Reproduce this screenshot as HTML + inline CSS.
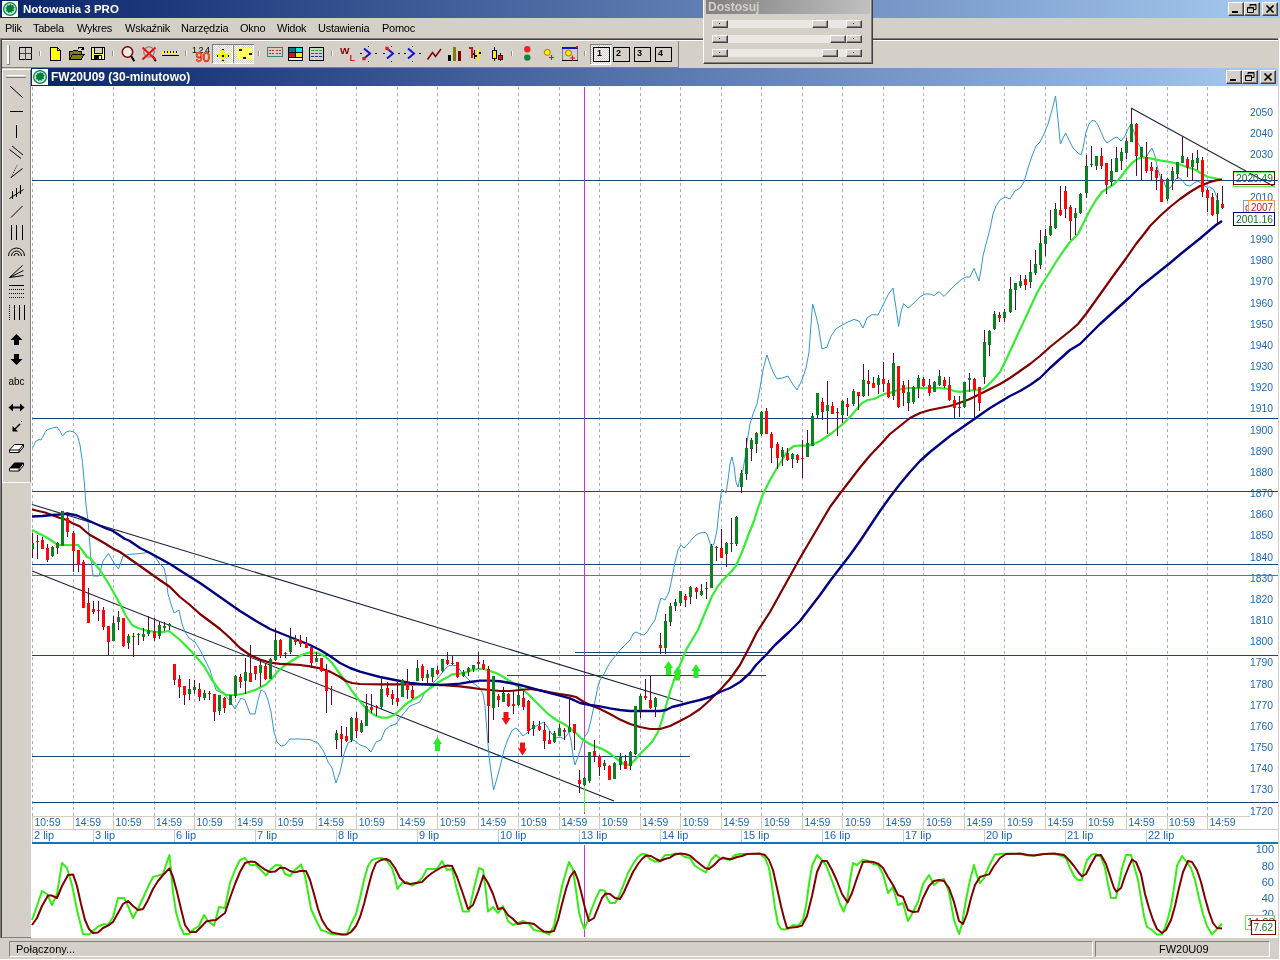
<!DOCTYPE html>
<html lang="pl">
<head>
<meta charset="utf-8">
<title>Notowania 3 PRO</title>
<style>
html,body{margin:0;padding:0;}
body{width:1280px;height:960px;overflow:hidden;background:#d4d0c8;position:relative;font-family:"Liberation Sans",sans-serif;font-size:11px;color:#000;}
.abs{position:absolute;}
#wrap{position:absolute;left:0;top:0;width:1280px;height:960px;will-change:transform;}
#titlebar{left:0;top:0;width:1280px;height:18px;background:linear-gradient(to right,#0a246a 0%,#a6caf0 100%);}
#titlebar .t{left:23px;top:1px;color:#fff;font-weight:bold;font-size:11.5px;line-height:16px;white-space:nowrap;}
.wbtn{width:16px;height:14px;background:#d4d0c8;box-sizing:border-box;border:1px solid;border-color:#fff #404040 #404040 #fff;box-shadow:inset -1px -1px 0 #808080;}
#menubar{left:0;top:18px;width:1280px;height:20px;background:#d4d0c8;}
#menubar span{position:absolute;top:3px;line-height:14px;font-size:11px;white-space:nowrap;letter-spacing:-0.25px;}
#tbline1{left:0;top:38px;width:1278px;height:1px;background:#808080;border-bottom:1px solid #404040;}
#tbline2{left:2px;top:40px;width:1276px;height:1px;background:#fff;}
#ledge{left:0;top:39px;width:1px;height:919px;background:#808080;border-right:1px solid #404040;}
#toolbar{left:2px;top:41px;width:677px;height:27px;background:#d4d0c8;box-sizing:border-box;border-right:1px solid #808080;border-bottom:1px solid #808080;}
.sep{width:1px;height:5px;background:#fff;top:52px;border-right:1px solid #a0a0a0;}
#childtitle{left:31px;top:68px;width:1247px;height:18px;background:linear-gradient(to right,#0a246a 0%,#a6caf0 100%);}
#childtitle .t{left:19px;top:1px;color:#fff;font-weight:bold;font-size:12px;line-height:16px;white-space:nowrap;}
#lefttb{left:2px;top:69px;width:29px;height:414px;background:#d4d0c8;box-sizing:border-box;border:1px solid;border-color:#fff #808080 #fff #fff;}
#chartbg{left:31px;top:86px;width:1247px;height:852px;background:#fff;}
#statusbar{left:0;top:938px;width:1280px;height:22px;background:#d4d0c8;}
.sunk{box-sizing:border-box;border:1px solid;border-color:#808080 #fff #fff #808080;}
#dost{left:703px;top:-1px;width:170px;height:65px;background:#d4d0c8;box-sizing:border-box;border:1px solid;border-color:#fff #404040 #404040 #fff;box-shadow:inset -1px -1px 0 #808080;}
#dost .tt{left:2px;top:0px;width:164px;height:14px;background:linear-gradient(to right,#808080,#c0c0c0);}
#dost .tt span{position:absolute;left:2px;top:0px;font-weight:bold;font-size:12px;line-height:14px;color:#d4d0c8;}
.sbtn{height:8px;width:16px;position:absolute;background:#d4d0c8;box-sizing:border-box;border:1px solid;border-color:#fff #404040 #404040 #fff;box-shadow:inset -1px -1px 0 #808080;}
.strack{height:8px;background:#eae8e4;}
svg text{font-family:"Liberation Sans",sans-serif;}
.sbtn.d::after{content:"";position:absolute;left:6px;top:2px;width:1px;height:1px;background:#000;}
</style>
</head>
<body>
<div id="wrap">
<div id="titlebar" class="abs">
 <svg class="abs" style="left:2px;top:1px" width="16" height="16" viewBox="0 0 16 16"><rect width="16" height="16" fill="#fff"/><circle cx="8" cy="8" r="6.4" fill="#b4f0d4" stroke="#178050" stroke-width="1.3"/><path d="M8.3 3 L9.5 4.3 L11.5 3.8 L11.3 5.5 L12.8 6.5 L11.5 8 L12 10 L10 10.2 L9.5 12 L8 11 L6.5 12.3 L5.8 10.5 L3.8 10.3 L4.5 8.5 L3.5 6.8 L5 5.8 L5 4 L6.8 4.5 Z" fill="#0a7a3a"/></svg>
 <div class="abs t">Notowania 3 PRO</div>
 <div class="abs wbtn" style="left:1228px;top:2px"><svg width="14" height="12"><rect x="3" y="8" width="6" height="2" fill="#000"/></svg></div>
 <div class="abs wbtn" style="left:1244px;top:2px"><svg width="14" height="12"><path d="M5 1.5h6v5h-2 M5 1.5v2 M2.5 4.5h6v5h-6z M5 2h6 M2.5 5h6" fill="none" stroke="#000" stroke-width="1"/></svg></div>
 <div class="abs wbtn" style="left:1262px;top:2px"><svg width="14" height="12"><path d="M3.5 2.5l7 7M10.5 2.5l-7 7" stroke="#000" stroke-width="1.7" fill="none"/></svg></div>
</div>
<div id="menubar" class="abs">
 <span style="left:5px">Plik</span><span style="left:33px">Tabela</span><span style="left:77px">Wykres</span><span style="left:125px">Wskaźnik</span><span style="left:181px">Narzędzia</span><span style="left:240px">Okno</span><span style="left:277px">Widok</span><span style="left:318px">Ustawienia</span><span style="left:382px">Pomoc</span>
</div>
<div id="tbline1" class="abs"></div><div id="tbline2" class="abs"></div><div id="ledge" class="abs"></div>
<div id="toolbar" class="abs"></div>
<div id="childtitle" class="abs">
 <svg class="abs" style="left:1px;top:1px" width="16" height="16" viewBox="0 0 16 16"><rect width="16" height="16" fill="#fff"/><circle cx="8" cy="8" r="6.4" fill="#b4f0d4" stroke="#178050" stroke-width="1.3"/><path d="M8.3 3 L9.5 4.3 L11.5 3.8 L11.3 5.5 L12.8 6.5 L11.5 8 L12 10 L10 10.2 L9.5 12 L8 11 L6.5 12.3 L5.8 10.5 L3.8 10.3 L4.5 8.5 L3.5 6.8 L5 5.8 L5 4 L6.8 4.5 Z" fill="#0a7a3a"/></svg>
 <div class="abs t" style="left:20px">FW20U09 (30-minutowo)</div>
 <div class="abs wbtn" style="left:1195px;top:2px"><svg width="14" height="12"><rect x="3" y="8" width="6" height="2" fill="#000"/></svg></div>
 <div class="abs wbtn" style="left:1211px;top:2px"><svg width="14" height="12"><path d="M5 1.5h6v5h-2 M5 1.5v2 M2.5 4.5h6v5h-6z M5 2h6 M2.5 5h6" fill="none" stroke="#000" stroke-width="1"/></svg></div>
 <div class="abs wbtn" style="left:1229px;top:2px"><svg width="14" height="12"><path d="M3.5 2.5l7 7M10.5 2.5l-7 7" stroke="#000" stroke-width="1.7" fill="none"/></svg></div>
</div>
<div id="lefttb" class="abs"></div>
<div id="chartbg" class="abs"></div>
<div class="abs" style="left:2px;top:937px;width:29px;height:1px;background:#808080"></div>
<div id="statusbar" class="abs">
 <div class="abs sunk" style="left:9px;top:3px;width:1084px;height:16px"><span class="abs" style="left:6px;top:0;line-height:14px;font-size:11px">Połączony...</span></div>
 <div class="abs sunk" style="left:1095px;top:3px;width:175px;height:16px"><span class="abs" style="left:63px;top:0;line-height:14px;font-size:11px">FW20U09</span></div>
</div>
<div class="abs" style="left:1279px;top:38px;width:1px;height:922px;background:#fff"></div>
<div class="abs" style="left:0;top:959px;width:1280px;height:1px;background:#fff"></div>
<div id="dost" class="abs">
 <div class="abs tt"><span>Dostosuj</span></div>
 <div class="abs strack" style="left:24px;top:20px;width:118px"></div>
 <div class="abs strack" style="left:24px;top:35px;width:118px"></div>
 <div class="abs strack" style="left:24px;top:49px;width:118px"></div>
 <div class="abs sbtn d" style="left:8px;top:20px"></div><div class="abs sbtn d" style="left:142px;top:20px"></div><div class="abs sbtn" style="left:108px;top:20px"></div>
 <div class="abs sbtn d" style="left:8px;top:35px"></div><div class="abs sbtn d" style="left:142px;top:35px"></div><div class="abs sbtn" style="left:126px;top:35px"></div>
 <div class="abs sbtn d" style="left:8px;top:49px"></div><div class="abs sbtn d" style="left:142px;top:49px"></div><div class="abs sbtn" style="left:118px;top:49px"></div>
</div>
<svg class="abs" style="left:0;top:0" width="1280" height="70" viewBox="0 0 1280 70">
<defs><pattern id="dith" width="2" height="2" patternUnits="userSpaceOnUse"><rect width="2" height="2" fill="#fff"/><rect width="1" height="1" fill="#d4d0c8"/><rect x="1" y="1" width="1" height="1" fill="#d4d0c8"/></pattern></defs>
<rect x="7" y="45" width="2" height="19" fill="#fff"/><rect x="9" y="45" width="1" height="20" fill="#808080"/><rect x="7" y="64" width="2" height="1" fill="#808080"/>
<rect x="39" y="51" width="1" height="5" fill="#909090"/><rect x="40" y="51" width="1" height="5" fill="#fff"/>
<rect x="112" y="51" width="1" height="5" fill="#909090"/><rect x="113" y="51" width="1" height="5" fill="#fff"/>
<rect x="185" y="51" width="1" height="5" fill="#909090"/><rect x="186" y="51" width="1" height="5" fill="#fff"/>
<rect x="258" y="51" width="1" height="5" fill="#909090"/><rect x="259" y="51" width="1" height="5" fill="#fff"/>
<rect x="331" y="51" width="1" height="5" fill="#909090"/><rect x="332" y="51" width="1" height="5" fill="#fff"/>
<rect x="511" y="51" width="1" height="5" fill="#909090"/><rect x="512" y="51" width="1" height="5" fill="#fff"/>
<rect x="584" y="51" width="1" height="5" fill="#909090"/><rect x="585" y="51" width="1" height="5" fill="#fff"/>
<g shape-rendering="crispEdges">
<rect x="19.5" y="47.5" width="12" height="12" fill="none" stroke="#000"/><path d="M25.5 48v12M20 53.5h12" stroke="#404040"/>
<path d="M50.5 47.5h7l3 3v9.5h-10z" fill="#ffff00" stroke="#000"/><path d="M57.5 47.5v3h3" fill="none" stroke="#000"/>
<path d="M69.5 59.5v-8h3l1-1.5h4l1 1.5h3v2" fill="#808000" stroke="#000"/><path d="M69.5 59.5l3-5.5h12l-3.5 5.5z" fill="#808000" stroke="#000"/>
<path d="M78 48.5c1-2 4-2 5 0.5M83.5 46.5v3h-3" fill="none" stroke="#000"/>
<rect x="91.500" y="47.500" width="13" height="12" fill="#ffff66" stroke="#000"/><rect x="94" y="48" width="8" height="5" fill="#d4d0c8" stroke="none"/><path d="M94.500 48v5h8v-5" fill="none" stroke="#000"/><rect x="94" y="55" width="8" height="5" fill="#000"/><rect x="99" y="56" width="2" height="3" fill="#fff"/>
</g>
<circle cx="127.500" cy="52" r="5.200" fill="#eeeae6" stroke="#800000" stroke-width="1.500"/><path d="M131.300 56.300l3 5" stroke="#000" stroke-width="2"/>
<circle cx="149" cy="52" r="5.200" fill="#d4d0c8" stroke="#808080" stroke-width="1.200"/><path d="M152.800 56.300l3 5" stroke="#000" stroke-width="2"/><path d="M142.500 47.500l13 12M155.500 47.500l-13 12" stroke="#ee1111" stroke-width="2"/>
<g shape-rendering="crispEdges"><rect x="162" y="51" width="17" height="3" fill="#ffff00"/><path d="M164.500 51v2M167.500 51v2M170.500 51v2M173.500 51v2M176.500 51v2" stroke="#000"/><rect x="162" y="55" width="17" height="1" fill="#000"/></g>
<text x="192" y="53" font-size="9" fill="#000" font-family="Liberation Sans,sans-serif" textLength="18">1 2 4</text>
<text x="195.500" y="61.500" font-size="14" fill="#ffb040" stroke="#dd1111" stroke-width="0.700" font-family="Liberation Sans,sans-serif" textLength="14.500" lengthAdjust="spacingAndGlyphs">90</text>
<g shape-rendering="crispEdges"><rect x="212" y="44" width="20" height="19" fill="url(#dith)"/><path d="M212.5 63v-18.500h20" fill="none" stroke="#808080"/><path d="M232.5 44.500v18.500h-20" fill="none" stroke="#fff"/></g>
<g shape-rendering="crispEdges"><rect x="233" y="44" width="20" height="19" fill="url(#dith)"/><path d="M233.5 63v-18.500h20" fill="none" stroke="#808080"/><path d="M253.5 44.500v18.500h-20" fill="none" stroke="#fff"/></g>
<g shape-rendering="crispEdges"><rect x="221" y="49" width="3" height="12" fill="#ffee00"/><rect x="217" y="54" width="12" height="3" fill="#ffee00"/><rect x="222" y="49" width="2" height="1" fill="#000"/><rect x="222" y="60" width="2" height="1" fill="#000"/><rect x="217" y="55" width="1" height="2" fill="#000"/><rect x="228" y="55" width="1" height="2" fill="#000"/><rect x="222" y="55" width="2" height="2" fill="#000"/>
<rect x="237" y="48" width="15" height="12" fill="#ffff66"/><rect x="239" y="49" width="3" height="2" fill="#400000"/><rect x="249" y="53" width="3" height="2" fill="#400000"/><rect x="243" y="57" width="3" height="2" fill="#400000"/>
<rect x="267.500" y="47.500" width="15" height="9" fill="#d4d0c8" stroke="#2a8a7a"/><path d="M269 50.500h5M276 50.500h5M269 53.500h5M276 53.500h5" stroke="#cc2222" stroke-dasharray="2 1"/>
<rect x="288" y="47" width="15" height="14" fill="#000"/><rect x="289" y="48" width="6" height="4" fill="#007a7a"/><rect x="296" y="48" width="6" height="4" fill="#00eeee"/><rect x="289" y="53" width="6" height="4" fill="#dd1111"/><rect x="296" y="53" width="6" height="4" fill="#ffee00"/><rect x="289" y="58" width="13" height="2" fill="#fff"/>
<rect x="309.500" y="47.500" width="14" height="13" fill="#d4d0c8" stroke="#000"/><path d="M311 50.500h11" stroke="#22aa22" stroke-dasharray="3 1"/><path d="M311 53.500h11" stroke="#cc2222" stroke-dasharray="3 1"/><path d="M311 56.500h11" stroke="#2222cc" stroke-dasharray="3 1"/>
</g>
<text x="340" y="53.500" font-size="8.500" font-weight="bold" fill="#800000" font-family="Liberation Sans,sans-serif" textLength="9.500" lengthAdjust="spacingAndGlyphs">W</text><text x="349.500" y="60.800" font-size="8.500" font-weight="bold" fill="#ee1111" font-family="Liberation Sans,sans-serif" textLength="5.500" lengthAdjust="spacingAndGlyphs">L</text>
<path d="M364.0 48.500l6 5l-6 5" fill="none" stroke="#1111dd" stroke-width="2"/><g shape-rendering="crispEdges" fill="#000"><rect x="360" y="53" width="2" height="1"/><rect x="375" y="53" width="2" height="1"/><rect x="368" y="46" width="1" height="1"/><rect x="368" y="61" width="1" height="1"/></g><path d="M366.0 56.500l-3 3m0 -2.500v2.500h2.500" fill="none" stroke="#ee1111" stroke-width="1.300"/>
<path d="M387.0 48.500l6 5l-6 5" fill="none" stroke="#1111dd" stroke-width="2"/><g shape-rendering="crispEdges" fill="#000"><rect x="383" y="53" width="2" height="1"/><rect x="398" y="53" width="2" height="1"/><rect x="391" y="46" width="1" height="1"/><rect x="391" y="61" width="1" height="1"/></g><path d="M389.0 50.500l-3 -3m0 2.500v-2.500h2.500" fill="none" stroke="#ee1111" stroke-width="1.300"/>
<path d="M408.0 48.500l6 5l-6 5" fill="none" stroke="#1111dd" stroke-width="2"/><g shape-rendering="crispEdges" fill="#000"><rect x="404" y="53" width="2" height="1"/><rect x="419" y="53" width="2" height="1"/><rect x="412" y="46" width="1" height="1"/><rect x="412" y="61" width="1" height="1"/></g>
<path d="M427.500 59.500l5-7l3 4l5.500-7.500" fill="none" stroke="#800000" stroke-width="1.500"/>
<g shape-rendering="crispEdges"><rect x="448" y="55" width="3" height="6" fill="#000"/><rect x="453" y="47" width="3" height="14" fill="#808000"/><rect x="458" y="51" width="3" height="10" fill="#800000"/>
<rect x="471" y="47" width="2" height="11" fill="#dd1111"/><rect x="469" y="47" width="2" height="2" fill="#dd1111"/><rect x="473" y="53" width="2" height="2" fill="#000"/><rect x="477" y="49" width="2" height="12" fill="#ffee00"/><rect x="475" y="55" width="2" height="2" fill="#000"/><rect x="479" y="52" width="2" height="2" fill="#000"/><rect x="474" y="50" width="1" height="9" fill="#000"/>
<rect x="492.500" y="50.500" width="4" height="8" fill="#ffee00" stroke="#000"/><path d="M494.500 47v3M494.500 59v2" stroke="#000"/><rect x="498.500" y="55.500" width="4" height="4" fill="#dd1111" stroke="#400000"/><path d="M500.500 53v2M500.500 60v1" stroke="#000"/></g>
<circle cx="527.300" cy="49.300" r="3.200" fill="#ee2222"/><circle cx="527.300" cy="57.600" r="3.200" fill="#118833"/>
<circle cx="547.300" cy="52.400" r="3" fill="#ffee00" stroke="#806600" stroke-width="0.800"/><path d="M549 57.500h5M551.500 55v5" stroke="#ee1111" stroke-width="1.200"/>
<g shape-rendering="crispEdges"><rect x="562" y="47" width="16" height="14" fill="#d4d0c8"/><rect x="562" y="47" width="16" height="2" fill="#1111cc"/><rect x="562" y="60" width="16" height="1" fill="#000"/><rect x="562" y="49" width="1" height="11" fill="#808080"/><rect x="577" y="49" width="1" height="11" fill="#808080"/><rect x="576" y="46" width="2" height="2" fill="#ee1111"/></g>
<circle cx="568.500" cy="53" r="3" fill="#ffee00" stroke="#806600" stroke-width="0.800"/><path d="M570 58h5M572.500 55.500v5" stroke="#ee1111" stroke-width="1.200"/>
<g shape-rendering="crispEdges"><rect x="590" y="44" width="21" height="20" fill="url(#dith)"/><path d="M590.500 64v-19.500h21" fill="none" stroke="#808080"/><path d="M610.500 44.500v19.500h-21" fill="none" stroke="#fff"/>
<rect x="593.5" y="47.500" width="16" height="14" fill="none" stroke="#000"/>
<rect x="613.5" y="47.500" width="16" height="14" fill="none" stroke="#000"/>
<rect x="634.5" y="47.500" width="16" height="14" fill="none" stroke="#000"/>
<rect x="655.5" y="47.500" width="16" height="14" fill="none" stroke="#000"/>
</g>
<text x="597" y="56" font-size="9" font-weight="bold" fill="#000" font-family="Liberation Sans,sans-serif">1</text>
<text x="616" y="56" font-size="9" font-weight="bold" fill="#000" font-family="Liberation Sans,sans-serif">2</text>
<text x="637" y="56" font-size="9" font-weight="bold" fill="#000" font-family="Liberation Sans,sans-serif">3</text>
<text x="658" y="56" font-size="9" font-weight="bold" fill="#000" font-family="Liberation Sans,sans-serif">4</text>
</svg>
<svg class="abs" style="left:0;top:68px" width="32" height="420" viewBox="0 68 32 420">
<g shape-rendering="crispEdges"><rect x="6" y="75" width="20" height="1" fill="#fff"/><rect x="6" y="77" width="20" height="1" fill="#808080"/></g>
<g stroke="#000" stroke-width="1" fill="none">
<path d="M10 86l12.500 11.500"/>
<path d="M10 111.500h13" shape-rendering="crispEdges"/>
<path d="M16.500 125v13" shape-rendering="crispEdges"/>
<path d="M9.500 149.500l11.500 9M12 146l11 9"/>
<path d="M11 177.500l11.500-9"/><path d="M11 177.500l6-12" stroke-dasharray="1 1.500"/>
<path d="M9.500 198.500l14-9M12.500 191v8M16.500 188v9M20.500 185v9"/>
<path d="M11 217.500l11.500-11.500"/>
<path d="M11.500 225v15M16.500 225v15M22.500 225v15" shape-rendering="crispEdges"/>
<path d="M8.500 256a8 8 0 0 1 16 0M11.500 256a5 5 0 0 1 10 0M14 256a2.500 2.500 0 0 1 5 0"/>
<path d="M9.500 277.500l13-12M9.500 277.500l14-7M9.500 277.500l14-2"/>
<path d="M9 285.500h15" shape-rendering="crispEdges"/><path d="M9 289.500h15M9 293.500h15M9 297.500h15" stroke-dasharray="1 1" shape-rendering="crispEdges"/>
<path d="M9.500 305v15" stroke-dasharray="1 1" shape-rendering="crispEdges"/><path d="M14.500 305v15M19.500 305v15M24.500 305v15" shape-rendering="crispEdges"/>
</g>
<path d="M16.500 334l6 6h-3.500v5h-5v-5h-3.500z" fill="#000"/>
<path d="M16.500 365l6-6h-3.500v-5h-5v5h-3.500z" fill="#000"/>
<text x="8.500" y="385" font-size="11" fill="#000" font-family="Liberation Sans,sans-serif" textLength="16" lengthAdjust="spacingAndGlyphs">abc</text>
<path d="M8.500 407.500l4.500-4v3h7v-3l4.500 4l-4.500 4v-3h-7v3z" fill="#000"/>
<path d="M14 430l6-6" stroke="#000" stroke-width="1.500" fill="none"/><path d="M12.500 431.500v-5.500l5.500 5.500z" fill="#000"/><rect x="21" y="421" width="1" height="1" fill="#000"/>
<path d="M9.500 450l5-5.500h9l-4.500 5.500zM9.500 450v2.500h9.500v-2.500M19 452.500l4.500-5.500v-2.500" fill="#fff" stroke="#000" stroke-linejoin="round"/>
<path d="M9.500 468.500l5-5.500h9l-4.500 5.500z" fill="#000" stroke="#000" stroke-linejoin="round"/><path d="M9.500 468.500v2.500h9.500v-2.500M19 471l4.500-5.500v-2.500" fill="#fff" stroke="#000" stroke-linejoin="round"/>
</svg>
<svg class="abs" style="left:0;top:0" width="1280" height="960" viewBox="0 0 1280 960">
<g stroke="#b0b0b0" stroke-width="1" stroke-dasharray="3 3" shape-rendering="crispEdges">
<line x1="32.5" y1="87" x2="32.5" y2="816"/>
<line x1="73.5" y1="87" x2="73.5" y2="816"/>
<line x1="113.5" y1="87" x2="113.5" y2="816"/>
<line x1="154.5" y1="87" x2="154.5" y2="816"/>
<line x1="194.5" y1="87" x2="194.5" y2="816"/>
<line x1="235.5" y1="87" x2="235.5" y2="816"/>
<line x1="275.5" y1="87" x2="275.5" y2="816"/>
<line x1="316.5" y1="87" x2="316.5" y2="816"/>
<line x1="356.5" y1="87" x2="356.5" y2="816"/>
<line x1="397.5" y1="87" x2="397.5" y2="816"/>
<line x1="437.5" y1="87" x2="437.5" y2="816"/>
<line x1="478.5" y1="87" x2="478.5" y2="816"/>
<line x1="518.5" y1="87" x2="518.5" y2="816"/>
<line x1="559.5" y1="87" x2="559.5" y2="816"/>
<line x1="599.5" y1="87" x2="599.5" y2="816"/>
<line x1="640.5" y1="87" x2="640.5" y2="816"/>
<line x1="680.5" y1="87" x2="680.5" y2="816"/>
<line x1="721.5" y1="87" x2="721.5" y2="816"/>
<line x1="761.5" y1="87" x2="761.5" y2="816"/>
<line x1="802.5" y1="87" x2="802.5" y2="816"/>
<line x1="842.5" y1="87" x2="842.5" y2="816"/>
<line x1="883.5" y1="87" x2="883.5" y2="816"/>
<line x1="923.5" y1="87" x2="923.5" y2="816"/>
<line x1="964.5" y1="87" x2="964.5" y2="816"/>
<line x1="1004.5" y1="87" x2="1004.5" y2="816"/>
<line x1="1045.5" y1="87" x2="1045.5" y2="816"/>
<line x1="1086.5" y1="87" x2="1086.5" y2="816"/>
<line x1="1126.5" y1="87" x2="1126.5" y2="816"/>
<line x1="1167.5" y1="87" x2="1167.5" y2="816"/>
<line x1="1207.5" y1="87" x2="1207.5" y2="816"/>
</g>
<g stroke="#d0ccc4" stroke-width="1" shape-rendering="crispEdges">
<line x1="32" y1="816.5" x2="1250" y2="816.5"/>
<line x1="32" y1="829.5" x2="1278" y2="829.5"/>
<line x1="32.5" y1="816" x2="32.5" y2="829"/>
<line x1="73.5" y1="816" x2="73.5" y2="829"/>
<line x1="113.5" y1="816" x2="113.5" y2="829"/>
<line x1="154.5" y1="816" x2="154.5" y2="829"/>
<line x1="194.5" y1="816" x2="194.5" y2="829"/>
<line x1="235.5" y1="816" x2="235.5" y2="829"/>
<line x1="275.5" y1="816" x2="275.5" y2="829"/>
<line x1="316.5" y1="816" x2="316.5" y2="829"/>
<line x1="356.5" y1="816" x2="356.5" y2="829"/>
<line x1="397.5" y1="816" x2="397.5" y2="829"/>
<line x1="437.5" y1="816" x2="437.5" y2="829"/>
<line x1="478.5" y1="816" x2="478.5" y2="829"/>
<line x1="518.5" y1="816" x2="518.5" y2="829"/>
<line x1="559.5" y1="816" x2="559.5" y2="829"/>
<line x1="599.5" y1="816" x2="599.5" y2="829"/>
<line x1="640.5" y1="816" x2="640.5" y2="829"/>
<line x1="680.5" y1="816" x2="680.5" y2="829"/>
<line x1="721.5" y1="816" x2="721.5" y2="829"/>
<line x1="761.5" y1="816" x2="761.5" y2="829"/>
<line x1="802.5" y1="816" x2="802.5" y2="829"/>
<line x1="842.5" y1="816" x2="842.5" y2="829"/>
<line x1="883.5" y1="816" x2="883.5" y2="829"/>
<line x1="923.5" y1="816" x2="923.5" y2="829"/>
<line x1="964.5" y1="816" x2="964.5" y2="829"/>
<line x1="1004.5" y1="816" x2="1004.5" y2="829"/>
<line x1="1045.5" y1="816" x2="1045.5" y2="829"/>
<line x1="1086.5" y1="816" x2="1086.5" y2="829"/>
<line x1="1126.5" y1="816" x2="1126.5" y2="829"/>
<line x1="1167.5" y1="816" x2="1167.5" y2="829"/>
<line x1="1207.5" y1="816" x2="1207.5" y2="829"/>
<line x1="32.5" y1="830" x2="32.5" y2="842"/>
<line x1="93.5" y1="830" x2="93.5" y2="842"/>
<line x1="174.5" y1="830" x2="174.5" y2="842"/>
<line x1="255.5" y1="830" x2="255.5" y2="842"/>
<line x1="336.5" y1="830" x2="336.5" y2="842"/>
<line x1="417.5" y1="830" x2="417.5" y2="842"/>
<line x1="498.5" y1="830" x2="498.5" y2="842"/>
<line x1="579.5" y1="830" x2="579.5" y2="842"/>
<line x1="660.5" y1="830" x2="660.5" y2="842"/>
<line x1="741.5" y1="830" x2="741.5" y2="842"/>
<line x1="822.5" y1="830" x2="822.5" y2="842"/>
<line x1="903.5" y1="830" x2="903.5" y2="842"/>
<line x1="984.5" y1="830" x2="984.5" y2="842"/>
<line x1="1065.5" y1="830" x2="1065.5" y2="842"/>
<line x1="1146.5" y1="830" x2="1146.5" y2="842"/>
</g>
<rect x="32" y="842" width="1246" height="2" fill="#1b6fb5"/>
<g font-size="11" fill="#1a66be">
<text x="34.5" y="826" textLength="26" lengthAdjust="spacingAndGlyphs">10:59</text>
<text x="75.0" y="826" textLength="26" lengthAdjust="spacingAndGlyphs">14:59</text>
<text x="115.5" y="826" textLength="26" lengthAdjust="spacingAndGlyphs">10:59</text>
<text x="156.1" y="826" textLength="26" lengthAdjust="spacingAndGlyphs">14:59</text>
<text x="196.6" y="826" textLength="26" lengthAdjust="spacingAndGlyphs">10:59</text>
<text x="237.1" y="826" textLength="26" lengthAdjust="spacingAndGlyphs">14:59</text>
<text x="277.6" y="826" textLength="26" lengthAdjust="spacingAndGlyphs">10:59</text>
<text x="318.1" y="826" textLength="26" lengthAdjust="spacingAndGlyphs">14:59</text>
<text x="358.7" y="826" textLength="26" lengthAdjust="spacingAndGlyphs">10:59</text>
<text x="399.2" y="826" textLength="26" lengthAdjust="spacingAndGlyphs">14:59</text>
<text x="439.7" y="826" textLength="26" lengthAdjust="spacingAndGlyphs">10:59</text>
<text x="480.2" y="826" textLength="26" lengthAdjust="spacingAndGlyphs">14:59</text>
<text x="520.7" y="826" textLength="26" lengthAdjust="spacingAndGlyphs">10:59</text>
<text x="561.3" y="826" textLength="26" lengthAdjust="spacingAndGlyphs">14:59</text>
<text x="601.8" y="826" textLength="26" lengthAdjust="spacingAndGlyphs">10:59</text>
<text x="642.3" y="826" textLength="26" lengthAdjust="spacingAndGlyphs">14:59</text>
<text x="682.8" y="826" textLength="26" lengthAdjust="spacingAndGlyphs">10:59</text>
<text x="723.3" y="826" textLength="26" lengthAdjust="spacingAndGlyphs">14:59</text>
<text x="763.9" y="826" textLength="26" lengthAdjust="spacingAndGlyphs">10:59</text>
<text x="804.4" y="826" textLength="26" lengthAdjust="spacingAndGlyphs">14:59</text>
<text x="844.9" y="826" textLength="26" lengthAdjust="spacingAndGlyphs">10:59</text>
<text x="885.4" y="826" textLength="26" lengthAdjust="spacingAndGlyphs">14:59</text>
<text x="925.9" y="826" textLength="26" lengthAdjust="spacingAndGlyphs">10:59</text>
<text x="966.5" y="826" textLength="26" lengthAdjust="spacingAndGlyphs">14:59</text>
<text x="1007.0" y="826" textLength="26" lengthAdjust="spacingAndGlyphs">10:59</text>
<text x="1047.5" y="826" textLength="26" lengthAdjust="spacingAndGlyphs">14:59</text>
<text x="1088.0" y="826" textLength="26" lengthAdjust="spacingAndGlyphs">10:59</text>
<text x="1128.5" y="826" textLength="26" lengthAdjust="spacingAndGlyphs">14:59</text>
<text x="1169.1" y="826" textLength="26" lengthAdjust="spacingAndGlyphs">10:59</text>
<text x="1209.6" y="826" textLength="26" lengthAdjust="spacingAndGlyphs">14:59</text>
<text x="34.0" y="839">2 lip</text>
<text x="95.0" y="839">3 lip</text>
<text x="176.0" y="839">6 lip</text>
<text x="257.0" y="839">7 lip</text>
<text x="338.0" y="839">8 lip</text>
<text x="419.0" y="839">9 lip</text>
<text x="500.0" y="839">10 lip</text>
<text x="581.0" y="839">13 lip</text>
<text x="662.0" y="839">14 lip</text>
<text x="743.0" y="839">15 lip</text>
<text x="824.0" y="839">16 lip</text>
<text x="905.0" y="839">17 lip</text>
<text x="986.0" y="839">20 lip</text>
<text x="1067.0" y="839">21 lip</text>
<text x="1148.0" y="839">22 lip</text>
<text x="1250" y="814.5" textLength="23" lengthAdjust="spacingAndGlyphs">1720</text>
<text x="1250" y="793.3" textLength="23" lengthAdjust="spacingAndGlyphs">1730</text>
<text x="1250" y="772.2" textLength="23" lengthAdjust="spacingAndGlyphs">1740</text>
<text x="1250" y="751.0" textLength="23" lengthAdjust="spacingAndGlyphs">1750</text>
<text x="1250" y="729.8" textLength="23" lengthAdjust="spacingAndGlyphs">1760</text>
<text x="1250" y="708.7" textLength="23" lengthAdjust="spacingAndGlyphs">1770</text>
<text x="1250" y="687.5" textLength="23" lengthAdjust="spacingAndGlyphs">1780</text>
<text x="1250" y="666.3" textLength="23" lengthAdjust="spacingAndGlyphs">1790</text>
<text x="1250" y="645.2" textLength="23" lengthAdjust="spacingAndGlyphs">1800</text>
<text x="1250" y="624.0" textLength="23" lengthAdjust="spacingAndGlyphs">1810</text>
<text x="1250" y="602.8" textLength="23" lengthAdjust="spacingAndGlyphs">1820</text>
<text x="1250" y="581.7" textLength="23" lengthAdjust="spacingAndGlyphs">1830</text>
<text x="1250" y="560.5" textLength="23" lengthAdjust="spacingAndGlyphs">1840</text>
<text x="1250" y="539.3" textLength="23" lengthAdjust="spacingAndGlyphs">1850</text>
<text x="1250" y="518.2" textLength="23" lengthAdjust="spacingAndGlyphs">1860</text>
<text x="1250" y="497.0" textLength="23" lengthAdjust="spacingAndGlyphs">1870</text>
<text x="1250" y="475.8" textLength="23" lengthAdjust="spacingAndGlyphs">1880</text>
<text x="1250" y="454.7" textLength="23" lengthAdjust="spacingAndGlyphs">1890</text>
<text x="1250" y="433.5" textLength="23" lengthAdjust="spacingAndGlyphs">1900</text>
<text x="1250" y="412.3" textLength="23" lengthAdjust="spacingAndGlyphs">1910</text>
<text x="1250" y="391.2" textLength="23" lengthAdjust="spacingAndGlyphs">1920</text>
<text x="1250" y="370.0" textLength="23" lengthAdjust="spacingAndGlyphs">1930</text>
<text x="1250" y="348.8" textLength="23" lengthAdjust="spacingAndGlyphs">1940</text>
<text x="1250" y="327.7" textLength="23" lengthAdjust="spacingAndGlyphs">1950</text>
<text x="1250" y="306.5" textLength="23" lengthAdjust="spacingAndGlyphs">1960</text>
<text x="1250" y="285.3" textLength="23" lengthAdjust="spacingAndGlyphs">1970</text>
<text x="1250" y="264.2" textLength="23" lengthAdjust="spacingAndGlyphs">1980</text>
<text x="1250" y="243.0" textLength="23" lengthAdjust="spacingAndGlyphs">1990</text>
<text x="1250" y="200.7" textLength="23" lengthAdjust="spacingAndGlyphs">2010</text>
<text x="1250" y="158.3" textLength="23" lengthAdjust="spacingAndGlyphs">2030</text>
<text x="1250" y="137.2" textLength="23" lengthAdjust="spacingAndGlyphs">2040</text>
<text x="1250" y="116.0" textLength="23" lengthAdjust="spacingAndGlyphs">2050</text>
<text x="1274" y="853.0" text-anchor="end">100</text>
<text x="1274" y="869.5" text-anchor="end">80</text>
<text x="1274" y="885.5" text-anchor="end">60</text>
<text x="1274" y="901.5" text-anchor="end">40</text>
<text x="1274" y="917.5" text-anchor="end">20</text>
</g>
<g stroke="#20426f" stroke-width="1" shape-rendering="crispEdges">
<line x1="32" y1="180.5" x2="1278" y2="180.5"/>
<line x1="32" y1="418.5" x2="1278" y2="418.5"/>
<line x1="32" y1="491.5" x2="1278" y2="491.5"/>
<line x1="32" y1="564.5" x2="1278" y2="564.5"/>
<line x1="32" y1="655.5" x2="1278" y2="655.5"/>
<line x1="32" y1="802.5" x2="1278" y2="802.5"/>
<line x1="32" y1="756.5" x2="690" y2="756.5"/>
<line x1="575" y1="652.5" x2="766" y2="652.5"/>
<line x1="507" y1="675.5" x2="766" y2="675.5"/>
</g>
<g stroke="#cc33cc" stroke-width="1" shape-rendering="crispEdges">
<line x1="32" y1="575.5" x2="1278" y2="575.5"/>
<line x1="584.5" y1="87" x2="584.5" y2="814"/>
<line x1="584.5" y1="845" x2="584.5" y2="937"/>
</g>
<g stroke="#18203c" stroke-width="1.1" fill="none">
<line x1="32" y1="504.5" x2="683" y2="702"/>
<line x1="32" y1="571" x2="614" y2="801"/>
<line x1="1131" y1="108" x2="1275" y2="187"/>
</g>
<polyline fill="none" stroke="#2f96d0" stroke-width="1" stroke-linejoin="round" points="32.5,447.5 36.0,441.0 39.0,439.5 41.0,440.0 45.0,432.5 47.5,429.5 52.5,428.0 57.0,427.0 60.0,431.0 62.5,436.0 66.0,432.0 70.0,431.0 74.0,432.0 77.5,436.0 80.0,445.0 82.5,462.5 84.5,485.0 86.0,505.0 88.0,520.0 91.0,560.0 93.0,576.0 99.0,576.0 103.0,561.0 108.5,553.5 114.0,563.0 118.5,569.0 123.0,556.0 129.0,554.4 140.0,553.6 148.0,552.4 155.0,557.0 160.0,564.0 164.0,568.0 166.0,577.0 168.0,594.0 171.0,604.0 174.0,613.0 179.0,610.0 182.0,624.0 185.0,632.0 189.0,638.0 195.0,642.0 200.0,650.0 205.0,660.0 210.0,670.0 213.0,680.0 216.0,690.0 224.0,694.0 230.0,701.0 235.0,709.0 241.0,698.0 245.0,700.0 250.0,714.0 255.0,714.0 258.0,700.0 261.0,690.0 265.0,692.0 268.0,700.0 271.0,712.0 274.0,732.0 277.0,742.0 281.0,746.0 285.0,745.0 290.0,739.0 300.0,739.0 310.0,739.6 318.0,743.0 324.0,752.0 328.0,762.0 332.0,768.0 336.0,783.0 340.0,772.0 344.0,754.0 348.0,743.0 354.0,740.0 360.0,745.0 366.0,747.0 371.0,752.0 376.0,742.0 381.0,740.0 385.0,730.0 390.0,726.0 396.0,724.0 400.0,718.0 404.0,713.0 410.0,706.0 416.0,703.6 420.0,702.0 424.0,694.0 430.0,688.0 434.0,682.0 438.0,678.0 442.0,673.0 446.0,668.0 449.0,665.6 457.0,665.6 462.0,673.0 466.0,677.0 470.0,681.0 476.0,685.0 480.0,688.0 483.0,694.0 485.0,706.0 487.0,732.0 489.0,756.0 491.0,772.0 493.6,790.0 497.0,778.0 500.0,767.0 504.0,750.0 508.0,739.0 512.0,730.5 516.0,728.0 520.0,732.0 523.0,736.0 528.0,732.0 532.0,728.0 540.0,724.0 544.0,722.0 548.0,728.0 552.0,734.0 556.0,738.0 560.0,737.0 564.0,739.0 569.0,732.0 571.0,740.0 573.0,756.0 575.0,765.0 579.0,754.0 582.0,744.0 584.0,738.0 588.0,732.0 591.0,720.0 594.0,706.0 596.0,696.0 598.0,686.0 600.0,680.0 604.0,674.0 608.0,666.0 612.0,660.0 616.0,655.0 620.0,650.0 626.0,644.0 630.0,640.0 633.0,634.0 636.0,632.0 640.0,634.0 644.0,635.0 647.0,632.0 650.0,627.0 655.0,620.0 658.0,608.0 661.0,598.0 665.0,600.0 669.0,592.0 672.0,578.0 675.0,562.0 678.0,550.0 681.0,545.0 684.0,548.0 688.0,544.0 692.0,539.0 696.0,535.0 700.0,533.0 705.0,532.4 707.0,534.0 709.0,540.0 711.0,546.0 714.0,544.0 717.0,530.0 719.0,510.0 721.0,494.0 722.0,489.0 726.0,493.0 728.0,480.0 730.0,464.0 732.0,457.0 734.0,466.0 736.0,482.0 738.0,487.0 740.0,478.0 743.0,470.0 745.0,458.0 747.0,442.0 750.0,424.0 753.0,414.0 757.0,404.0 760.0,388.0 763.0,370.0 766.0,358.0 767.0,355.0 770.0,364.0 773.0,372.0 777.0,379.0 782.0,378.0 788.0,376.0 792.0,383.0 797.0,390.0 802.0,380.0 806.0,368.0 809.0,352.0 811.0,324.0 812.6,304.0 815.0,312.0 818.0,324.0 822.0,349.0 827.0,347.0 831.0,336.0 836.0,329.0 842.0,325.0 848.0,322.0 854.0,319.4 859.0,321.0 863.0,328.0 867.0,318.0 872.0,314.6 878.0,315.0 882.0,307.0 888.0,295.0 893.0,288.0 896.0,308.0 898.6,326.4 901.0,312.0 903.6,303.6 908.0,308.0 914.0,303.0 920.0,297.0 925.0,294.0 930.0,294.0 934.0,295.6 939.0,291.6 944.0,296.4 950.0,290.0 956.0,284.0 962.0,279.0 966.0,277.0 970.0,277.0 974.0,268.4 979.0,281.0 981.0,270.0 983.0,256.0 986.0,244.0 990.0,229.0 993.0,214.0 996.0,206.0 1000.0,200.0 1005.0,197.0 1010.0,199.0 1015.0,191.0 1020.0,188.0 1024.0,182.0 1028.0,168.0 1032.0,156.0 1036.0,146.0 1040.0,142.0 1044.0,134.0 1048.0,124.0 1052.0,110.0 1055.6,96.0 1058.0,120.0 1060.4,144.0 1063.0,138.0 1065.6,133.0 1069.0,140.0 1073.0,148.0 1078.0,153.0 1081.0,155.0 1083.0,148.0 1086.0,132.0 1089.0,124.0 1092.0,120.4 1095.0,121.0 1098.0,125.0 1101.0,132.0 1104.0,139.0 1107.0,143.0 1110.0,141.0 1114.0,138.0 1117.0,137.0 1121.0,141.0 1125.0,136.0 1128.0,129.0 1131.0,124.0 1134.0,132.0 1137.0,142.0 1140.0,146.0 1143.0,158.0 1146.0,158.0 1149.0,152.0 1152.0,148.0 1155.0,156.0 1158.0,170.0 1161.0,179.0 1164.0,182.0 1167.0,190.0 1171.0,187.0 1175.0,180.0 1178.0,177.0 1182.0,180.0 1186.0,185.0 1190.0,186.0 1194.0,183.0 1198.0,181.0 1202.0,184.0 1206.0,187.0 1210.0,187.0 1214.0,190.0 1217.0,198.0 1218.0,204.0"/>
<polyline fill="none" stroke="#33ee33" stroke-width="2.2" stroke-linejoin="round" points="32.0,530.0 40.0,534.0 47.5,538.0 55.0,543.0 58.0,545.0 62.5,545.0 78.0,545.0 82.0,550.0 87.0,557.0 90.0,558.0 100.0,570.0 110.0,586.0 120.0,604.0 126.0,616.0 132.0,625.0 138.0,628.0 148.0,631.0 160.0,632.4 169.0,631.0 180.0,640.0 192.0,652.0 204.0,666.0 212.0,680.0 220.0,691.0 226.0,695.0 236.0,695.0 246.0,693.0 256.0,689.6 266.0,684.5 272.0,678.5 278.0,671.0 284.0,666.0 290.0,662.0 298.0,657.0 304.0,654.0 310.0,652.4 318.0,653.0 326.0,657.0 332.0,663.0 340.0,674.0 346.0,682.0 352.0,691.0 358.0,699.0 364.0,706.0 370.0,712.0 376.0,716.0 382.0,717.6 388.0,717.6 394.0,715.0 400.0,710.0 406.0,704.0 412.0,700.0 418.0,697.0 424.0,693.0 430.0,688.0 436.0,684.0 442.0,680.0 448.0,677.0 452.0,674.4 460.0,673.6 466.0,672.4 472.0,670.0 478.0,669.0 484.0,669.0 490.0,671.0 496.0,673.0 502.0,676.0 508.0,680.0 516.0,685.0 522.0,689.0 528.0,694.0 534.0,700.0 540.0,706.0 546.0,712.0 552.0,717.0 558.0,721.0 564.0,724.0 570.0,728.0 576.0,733.0 582.0,739.0 588.0,743.0 594.0,746.0 600.0,748.0 606.0,751.0 612.0,755.0 618.0,760.0 624.0,764.0 630.0,765.0 634.0,761.0 640.0,754.0 646.0,748.0 652.0,742.0 658.0,732.0 662.0,720.0 666.0,706.0 670.0,692.0 674.0,680.0 678.0,670.0 682.0,660.0 686.0,650.0 692.0,640.0 698.0,630.0 702.0,620.0 707.0,608.0 712.0,596.0 718.0,586.0 724.0,579.0 730.0,573.0 736.0,566.0 742.0,552.0 748.0,536.0 754.0,521.0 758.0,508.0 763.0,494.0 770.0,480.0 777.0,468.0 783.0,458.5 788.0,450.5 794.0,446.0 800.0,445.6 808.0,445.6 814.0,444.0 820.0,441.0 826.0,437.0 832.0,433.0 838.0,428.0 844.0,423.0 850.0,417.0 856.0,410.0 862.0,403.0 868.0,400.0 874.0,399.0 880.0,396.0 886.0,393.6 892.0,392.4 898.0,390.0 904.0,388.6 910.0,388.0 920.0,388.0 930.0,388.0 940.0,388.0 948.0,389.0 954.0,391.0 960.0,391.8 966.0,391.0 972.0,390.4 978.0,390.0 983.0,389.0 988.0,385.0 994.0,379.0 1000.0,372.0 1006.0,360.0 1012.0,347.0 1018.0,334.0 1024.0,321.0 1030.0,308.0 1036.0,295.0 1042.0,284.0 1048.0,275.0 1056.0,262.0 1064.0,250.0 1070.0,242.0 1078.0,234.0 1084.0,222.0 1090.0,210.0 1096.0,200.0 1102.0,192.0 1108.0,188.0 1114.0,184.0 1120.0,178.0 1126.0,170.0 1132.0,163.0 1136.0,160.0 1142.0,157.0 1150.0,158.4 1160.0,160.4 1170.0,162.0 1178.0,164.0 1184.0,166.0 1190.0,168.0 1196.0,170.0 1202.0,174.0 1208.0,177.0 1214.0,178.0 1222.0,180.0"/>
<polyline fill="none" stroke="#800000" stroke-width="2.2" stroke-linejoin="round" points="32.0,509.5 45.0,512.5 60.0,518.0 67.0,520.0 72.0,523.0 80.0,526.5 85.0,531.0 90.0,535.0 99.0,540.0 105.0,543.5 113.8,549.0 120.0,552.0 130.0,559.0 140.0,566.0 154.0,576.0 170.0,587.0 180.0,597.0 190.0,605.0 200.0,614.0 210.0,621.5 220.0,629.0 230.0,638.0 240.0,648.0 250.0,655.0 260.0,659.5 270.0,662.6 280.0,663.8 290.0,664.4 300.0,665.0 310.0,666.4 320.0,668.4 330.0,671.6 340.0,677.0 346.0,681.0 352.0,683.0 360.0,684.0 380.0,684.4 400.0,684.4 420.0,684.4 440.0,685.0 460.0,686.4 470.0,687.6 480.0,689.0 490.0,690.0 500.0,691.0 510.0,691.0 520.0,690.0 530.0,689.0 540.0,690.4 550.0,692.4 560.0,694.0 570.0,695.6 576.0,697.0 584.0,702.0 590.0,705.0 600.0,709.0 610.0,714.0 620.0,719.6 630.0,724.0 640.0,727.0 650.0,729.0 660.0,729.0 670.0,726.0 680.0,721.0 690.0,715.6 700.0,709.0 710.0,700.0 720.0,690.0 730.0,679.0 740.0,665.0 750.0,646.0 757.0,632.0 770.0,612.0 780.0,594.0 790.0,576.0 800.0,558.0 810.0,541.0 820.0,524.0 830.0,507.0 840.0,493.5 850.0,480.5 860.0,467.5 870.0,455.5 880.0,445.0 890.0,434.0 900.0,426.0 910.0,418.0 920.0,413.0 930.0,410.0 940.0,408.0 950.0,406.0 960.0,402.8 970.0,399.0 980.0,394.0 990.0,389.0 1000.0,384.0 1010.0,378.0 1020.0,371.0 1030.0,364.0 1040.0,356.0 1050.0,347.0 1060.0,339.0 1070.0,331.0 1078.0,324.0 1086.0,314.0 1096.0,300.0 1106.0,286.0 1116.0,272.0 1126.0,258.5 1136.0,244.0 1144.0,234.0 1150.0,226.0 1160.0,216.0 1170.0,207.0 1180.0,199.0 1190.0,192.0 1200.0,186.0 1210.0,182.0 1216.0,180.4 1222.0,179.6"/>
<polyline fill="none" stroke="#000080" stroke-width="2.4" stroke-linejoin="round" points="32.0,516.5 42.0,516.0 52.0,515.0 62.0,514.4 67.0,513.5 77.0,515.5 85.0,519.0 95.0,523.5 105.0,528.0 113.0,531.0 125.0,539.0 129.0,540.5 140.0,548.0 150.0,553.0 160.0,558.5 170.0,564.0 184.0,573.0 200.0,583.0 220.0,597.0 240.0,611.0 256.0,621.0 270.0,629.0 280.0,633.0 290.0,637.0 300.0,641.0 310.0,645.0 320.0,650.0 330.0,656.0 340.0,663.0 350.0,668.0 360.0,671.6 370.0,674.4 380.0,677.0 390.0,679.0 400.0,681.0 410.0,683.0 420.0,684.0 430.0,684.4 440.0,685.0 450.0,684.4 460.0,683.6 470.0,682.0 480.0,680.6 490.0,680.6 500.0,681.3 510.0,683.0 520.0,685.0 530.0,687.6 540.0,690.4 550.0,693.0 560.0,695.6 570.0,698.4 580.0,703.0 590.0,705.0 600.0,706.4 610.0,708.4 620.0,710.0 630.0,711.0 640.0,711.0 650.0,711.0 660.0,711.0 666.0,710.0 672.0,707.0 680.0,705.0 690.0,702.4 700.0,700.0 710.0,697.0 720.0,692.0 730.0,688.0 740.0,682.0 750.0,673.0 756.0,665.0 765.0,656.0 775.0,645.0 789.0,632.0 800.0,621.0 810.0,608.0 820.0,595.0 830.0,581.0 840.0,568.0 850.0,555.0 860.0,541.0 870.0,526.0 880.0,511.0 890.0,497.0 900.0,484.0 910.0,472.0 920.0,461.0 930.0,452.0 940.0,444.0 950.0,436.0 960.0,429.0 970.0,422.0 980.0,415.0 990.0,408.0 1000.0,402.0 1010.0,396.0 1020.0,391.0 1030.0,385.0 1040.0,378.0 1050.0,368.0 1060.0,359.0 1070.0,350.0 1080.0,344.0 1090.0,334.0 1100.0,324.0 1110.0,315.0 1120.0,306.0 1130.0,297.0 1140.0,287.0 1150.0,279.0 1160.0,271.0 1170.0,263.0 1180.0,254.5 1190.0,246.5 1200.0,238.5 1210.0,230.0 1216.0,225.0 1222.0,221.0"/>
<g shape-rendering="crispEdges">
<path d="M32 533v25M52 546v11M57 542v12M62 511v35M113 616v25M118 611v19M128 634v15M133 633v24M138 633v12M143 628v13M148 616v20M159 622v17M164 622v9M169 623v7M189 679v21M194 680v14M204 690v10M219 695v20M230 695v10M235 675v23M245 658v36M260 660v27M270 658v21M275 628v33M290 628v26M316 652v10M331 686v19M336 730v19M351 717v25M361 720v13M366 694v32M381 677v32M402 679v18M417 660v21M427 670v16M432 668v14M442 659v13M463 670v7M468 667v9M473 665v7M493 676v44M503 687v15M518 686v20M533 721v15M554 731v12M559 724v12M569 698v34M584 777v9M589 752v31M604 760v10M614 762v17M620 753v17M630 751v19M635 706v49M640 694v24M655 697v20M665 614v40M670 603v23M675 599v12M680 591v15M690 586v18M701 584v12M706 582v17M711 544v44M726 542v25M731 518v34M736 516v30M741 470v23M746 438v42M751 438v23M756 432v21M761 411v25M782 447v19M792 453v15M807 430v27M812 413v33M817 393v25M827 381v53M842 400v23M853 389v17M863 364v33M878 375v19M893 353v47M908 380v31M913 386v18M918 375v23M934 381v11M939 370v16M964 382v26M969 373v19M984 330v54M989 330v26M994 311v19M1004 309v13M1010 277v36M1015 283v27M1020 275v13M1030 260v28M1035 250v25M1040 230v39M1045 229v27M1050 210v26M1055 203v26M1075 208v27M1080 193v21M1086 155v43M1091 146v21M1096 156v14M1111 159v27M1116 147v25M1121 148v22M1126 138v21M1131 108v34M1141 147v33M1167 178v23M1172 167v23M1177 162v17M1182 137v26M1192 153v28M1197 150v20M1217 193v30" stroke="#640a28" stroke-width="1" fill="none" transform="translate(0.5,0)"/>
<path d="M37 535v24M42 537v12M47 544v18M67 512v25M73 531v41M78 550v22M83 560v48M88 588v35M93 601v13M98 601v20M103 607v23M108 626v29M123 618v29M154 618v23M174 664v21M179 675v23M184 686v19M199 683v18M209 691v9M214 694v27M224 697v16M240 674v14M250 645v37M255 666v14M265 663v17M280 639v19M285 652v6M295 635v10M300 635v12M306 637v11M311 647v21M321 658v14M326 664v49M341 726v30M346 727v15M356 712v26M371 694v19M376 705v11M387 682v15M392 690v15M397 682v24M407 669v30M412 686v13M422 664v17M437 666v9M447 652v13M452 656v9M457 662v16M478 652v17M483 660v10M488 666v77M498 694v13M508 693v14M513 691v23M523 691v19M528 700v34M539 721v10M544 722v27M549 731v13M564 728v12M574 724v26M579 770v23M594 740v22M599 755v21M609 765v15M625 755v14M645 679v21M650 676v33M660 633v21M685 594v13M696 587v12M716 546v15M721 529v29M766 408v26M771 432v31M777 442v27M787 448v13M797 454v9M802 440v38M822 398v22M832 402v12M837 408v28M847 398v18M858 392v18M868 370v26M873 377v11M883 362v30M888 380v18M898 366v42M903 381v25M923 377v10M929 379v17M944 377v11M949 377v24M954 396v22M959 396v21M974 378v40M979 387v24M999 312v10M1025 275v15M1060 186v30M1065 186v32M1070 205v35M1101 148v21M1106 163v31M1136 123v53M1146 142v31M1151 162v19M1156 167v23M1161 174v28M1187 157v20M1202 157v40M1207 188v24M1212 193v23M1222 186v23" stroke="#640a28" stroke-width="1" fill="none" transform="translate(0.5,0)"/>
<path d="M32 543h2v6h-2zM51 547h3v9h-3zM56 543h3v5h-3zM61 511h3v35h-3zM112 623h3v18h-3zM117 617h3v5h-3zM127 636h3v7h-3zM132 636h3v1h-3zM137 634h3v1h-3zM142 634h3v3h-3zM147 630h3v4h-3zM158 625h3v11h-3zM163 626h3v2h-3zM168 624h3v2h-3zM188 689h3v5h-3zM193 687h3v3h-3zM203 693h3v5h-3zM218 695h3v16h-3zM229 695h3v10h-3zM234 676h3v20h-3zM244 672h3v9h-3zM259 665h3v8h-3zM269 659h3v20h-3zM274 640h3v20h-3zM289 638h3v14h-3zM315 658h3v4h-3zM330 689h3v1h-3zM335 733h3v7h-3zM350 718h3v22h-3zM360 723h3v9h-3zM365 706h3v20h-3zM380 689h3v18h-3zM401 680h3v17h-3zM416 668h3v13h-3zM426 674h3v4h-3zM431 668h3v9h-3zM441 659h3v12h-3zM462 672h3v4h-3zM467 668h3v4h-3zM472 665h3v4h-3zM492 676h3v32h-3zM502 693h3v9h-3zM517 695h3v10h-3zM532 725h3v4h-3zM553 733h3v9h-3zM558 728h3v8h-3zM568 727h3v5h-3zM583 778h3v7h-3zM588 752h3v29h-3zM603 763h3v3h-3zM613 763h3v16h-3zM619 756h3v9h-3zM629 752h3v14h-3zM634 706h3v48h-3zM639 696h3v14h-3zM654 698h3v9h-3zM664 621h3v27h-3zM669 606h3v16h-3zM674 602h3v4h-3zM679 591h3v12h-3zM689 587h3v10h-3zM700 591h3v4h-3zM705 588h3v1h-3zM710 546h3v42h-3zM725 543h3v11h-3zM730 543h3v1h-3zM735 517h3v27h-3zM740 473h3v14h-3zM745 448h3v26h-3zM750 440h3v9h-3zM755 433h3v11h-3zM760 412h3v22h-3zM781 450h3v7h-3zM791 454h3v5h-3zM806 443h3v14h-3zM811 416h3v30h-3zM816 393h3v22h-3zM826 405h3v6h-3zM841 401h3v14h-3zM852 391h3v13h-3zM862 380h3v16h-3zM877 378h3v7h-3zM892 363h3v33h-3zM907 392h3v11h-3zM912 387h3v15h-3zM917 378h3v10h-3zM933 382h3v10h-3zM938 376h3v9h-3zM963 382h3v25h-3zM968 378h3v2h-3zM983 342h3v35h-3zM988 331h3v14h-3zM993 314h3v15h-3zM1003 312h3v6h-3zM1009 289h3v23h-3zM1014 283h3v7h-3zM1019 281h3v5h-3zM1029 272h3v10h-3zM1034 264h3v9h-3zM1039 243h3v22h-3zM1044 236h3v8h-3zM1049 226h3v9h-3zM1054 209h3v19h-3zM1074 213h3v5h-3zM1079 194h3v19h-3zM1085 166h3v27h-3zM1090 164h3v1h-3zM1095 156h3v10h-3zM1110 171h3v11h-3zM1115 158h3v14h-3zM1120 152h3v9h-3zM1125 141h3v12h-3zM1130 124h3v18h-3zM1140 147h3v10h-3zM1166 179h3v20h-3zM1171 171h3v9h-3zM1176 162h3v12h-3zM1181 156h3v7h-3zM1191 160h3v7h-3zM1196 158h3v5h-3zM1216 200h3v14h-3z" fill="#0a8220"/>
<path d="M36 541h3v1h-3zM41 540h3v9h-3zM46 548h3v12h-3zM66 518h3v14h-3zM72 533h3v18h-3zM77 550h3v15h-3zM82 562h3v46h-3zM87 603h3v20h-3zM92 609h3v3h-3zM97 610h3v1h-3zM102 610h3v17h-3zM107 626h3v16h-3zM122 618h3v28h-3zM153 631h3v7h-3zM173 664h3v16h-3zM178 679h3v8h-3zM183 686h3v9h-3zM198 689h3v8h-3zM208 693h3v1h-3zM213 694h3v18h-3zM223 698h3v10h-3zM239 677h3v5h-3zM249 673h3v9h-3zM254 666h3v8h-3zM264 666h3v13h-3zM279 640h3v16h-3zM284 653h3v1h-3zM294 639h3v3h-3zM299 640h3v4h-3zM305 643h3v5h-3zM310 647h3v16h-3zM320 658h3v13h-3zM325 670h3v21h-3zM340 734h3v5h-3zM345 736h3v5h-3zM355 718h3v13h-3zM370 707h3v3h-3zM375 706h3v1h-3zM386 688h3v7h-3zM391 694h3v5h-3zM396 698h3v4h-3zM406 683h3v7h-3zM411 690h3v8h-3zM421 666h3v12h-3zM436 670h3v4h-3zM446 660h3v4h-3zM451 663h3v1h-3zM456 662h3v15h-3zM477 662h3v2h-3zM482 664h3v5h-3zM487 669h3v37h-3zM497 696h3v4h-3zM507 694h3v12h-3zM512 704h3v2h-3zM522 698h3v9h-3zM527 701h3v30h-3zM538 726h3v4h-3zM543 730h3v11h-3zM548 740h3v4h-3zM563 730h3v2h-3zM573 724h3v9h-3zM578 780h3v4h-3zM593 751h3v5h-3zM598 756h3v11h-3zM608 766h3v14h-3zM624 761h3v8h-3zM644 696h3v2h-3zM649 700h3v8h-3zM659 645h3v3h-3zM684 596h3v4h-3zM695 588h3v4h-3zM715 547h3v1h-3zM720 548h3v10h-3zM765 411h3v23h-3zM770 434h3v14h-3zM776 444h3v14h-3zM786 453h3v7h-3zM796 455h3v5h-3zM801 458h3v1h-3zM821 402h3v10h-3zM831 406h3v8h-3zM836 412h3v1h-3zM846 404h3v3h-3zM857 392h3v4h-3zM867 381h3v3h-3zM872 383h3v5h-3zM882 379h3v5h-3zM887 383h3v14h-3zM897 366h3v41h-3zM902 385h3v8h-3zM922 379h3v7h-3zM928 385h3v8h-3zM943 380h3v6h-3zM948 385h3v15h-3zM953 400h3v8h-3zM958 407h3v1h-3zM973 379h3v11h-3zM978 387h3v16h-3zM998 315h3v3h-3zM1024 279h3v6h-3zM1059 210h3v5h-3zM1064 191h3v18h-3zM1069 207h3v14h-3zM1100 156h3v10h-3zM1105 163h3v22h-3zM1135 124h3v32h-3zM1145 157h3v14h-3zM1150 167h3v4h-3zM1155 170h3v8h-3zM1160 179h3v23h-3zM1186 159h3v9h-3zM1201 160h3v32h-3zM1206 190h3v8h-3zM1211 197h3v18h-3zM1221 204h3v4h-3z" fill="#f80808"/>
</g>
<line x1="584.5" y1="786" x2="584.5" y2="812" stroke="#66ee33" stroke-width="1" shape-rendering="crispEdges"/>
<path fill="#22ee22" d="M437.5 737.0l4.5 7h-2v7.0h-5v-7.0h-2zM668.5 661.0l4.5 7h-2v7.0h-5v-7.0h-2zM677.5 666.5l4.5 7h-2v7.0h-5v-7.0h-2zM696.0 664.0l4.5 7h-2v7.0h-5v-7.0h-2z"/>
<path fill="#ee1111" d="M503.5 712.0h5v6.0h2l-4.5 7l-4.5 -7h2zM520.0 742.5h5v6.0h2l-4.5 7l-4.5 -7h2z"/>
<polyline fill="none" stroke="#33ee11" stroke-width="2" stroke-linejoin="round" points="32.0,920.0 37.0,906.0 42.0,891.0 47.0,894.0 52.0,905.0 57.0,894.0 62.0,863.0 67.0,868.0 72.0,885.0 77.0,910.0 83.0,934.0 89.0,934.4 94.0,930.0 99.0,926.0 104.0,924.0 108.0,925.0 113.0,917.0 118.0,898.0 124.0,898.0 128.0,906.0 133.0,918.0 138.0,909.0 143.0,898.0 148.0,887.0 153.0,877.0 158.0,875.6 163.0,874.0 167.0,862.0 169.4,855.0 171.0,870.0 173.0,892.0 176.0,912.0 180.0,926.0 184.0,934.0 189.0,934.0 194.0,929.0 199.0,926.0 204.0,915.0 208.0,921.0 214.0,925.6 219.0,907.0 225.0,908.0 230.0,883.0 235.0,870.0 240.0,860.0 245.0,858.0 250.0,865.0 256.0,865.0 261.0,870.0 266.0,875.6 271.0,869.0 276.0,865.0 281.0,865.6 285.0,874.0 290.0,876.0 295.0,870.0 301.0,864.4 305.0,876.0 308.0,892.0 311.0,909.0 316.0,920.0 321.0,930.0 326.0,931.6 331.0,934.0 337.0,934.4 342.0,934.4 347.0,934.0 351.0,924.0 356.0,914.0 360.0,898.0 364.0,880.0 368.0,866.0 372.0,860.0 377.0,858.4 382.0,858.0 387.0,861.0 392.0,868.0 395.0,878.0 397.4,889.0 402.0,883.0 407.0,882.0 412.0,885.6 417.0,883.0 422.0,878.0 427.0,869.0 432.0,869.0 437.0,869.0 442.0,861.0 447.0,870.0 452.0,869.0 457.0,890.0 463.0,911.6 469.0,911.6 474.0,888.0 479.0,868.0 483.0,869.6 486.0,892.0 488.0,911.6 493.0,907.0 498.0,913.0 503.0,906.0 508.0,921.0 513.0,925.0 518.0,923.0 523.0,921.0 529.0,924.0 534.0,930.0 539.0,931.0 544.0,932.0 549.0,934.4 554.0,926.0 558.0,906.0 562.0,886.0 566.0,872.0 569.0,862.0 573.0,870.0 576.0,890.0 579.0,912.0 581.6,922.0 584.4,929.0 588.0,920.0 592.0,908.0 596.0,898.0 600.0,890.0 604.4,890.4 607.0,898.0 610.0,903.0 615.0,903.0 619.0,896.0 623.0,886.0 628.0,873.0 633.0,864.0 638.0,857.0 642.0,854.0 646.0,854.4 650.0,859.0 655.0,861.6 660.0,861.6 665.0,855.0 670.0,855.0 675.0,853.6 680.0,854.0 685.0,857.0 690.0,858.0 695.0,866.0 700.0,869.0 706.0,872.4 711.0,860.0 716.0,855.0 720.0,858.4 725.0,859.0 730.0,860.0 735.0,855.0 740.0,854.0 750.0,854.0 760.0,854.0 765.0,858.0 769.0,868.0 772.0,886.0 775.0,908.0 778.0,924.0 781.0,929.0 784.0,929.6 788.0,929.0 793.0,925.0 798.0,926.0 803.0,920.0 806.0,906.0 809.0,884.0 812.0,866.0 817.0,855.0 821.0,859.0 826.0,865.0 831.0,878.0 836.0,892.0 840.0,904.0 843.6,911.6 847.0,902.0 850.0,880.0 853.0,863.0 857.0,865.0 863.0,859.6 868.0,861.0 873.0,864.0 878.0,865.0 883.0,874.0 888.0,893.0 893.0,887.0 898.0,905.0 903.0,903.0 908.0,921.0 913.0,912.0 918.0,902.0 923.0,884.0 929.0,875.0 934.0,885.0 939.0,881.0 944.0,879.0 949.0,892.0 954.0,920.0 959.0,934.0 962.0,924.0 966.0,900.0 970.0,880.0 974.0,865.0 977.0,876.0 980.0,883.0 984.0,878.0 989.0,866.0 995.0,854.4 1000.0,854.0 1010.0,853.6 1020.0,854.0 1028.0,855.6 1034.0,855.6 1044.0,854.0 1054.0,854.0 1061.0,855.6 1066.0,858.0 1070.0,868.0 1074.0,876.0 1078.0,880.0 1082.0,880.0 1084.0,870.0 1087.0,860.0 1092.0,854.4 1096.0,854.0 1101.0,857.0 1105.0,868.0 1108.0,884.0 1111.0,898.0 1116.0,898.0 1119.0,884.0 1122.0,868.0 1126.0,855.0 1131.0,855.0 1134.0,866.0 1138.0,880.0 1141.0,898.0 1144.0,916.0 1147.0,927.0 1152.0,930.0 1157.0,934.4 1162.0,934.4 1165.0,928.0 1168.0,918.0 1171.0,906.0 1174.0,888.0 1177.0,866.0 1182.0,856.0 1186.0,861.0 1191.0,868.0 1195.0,880.0 1199.0,898.0 1203.0,914.0 1207.0,926.0 1212.0,934.4 1216.0,930.0 1222.0,923.6"/>
<polyline fill="none" stroke="#800000" stroke-width="2" stroke-linejoin="round" points="32.0,925.0 37.0,918.0 42.0,906.0 48.0,895.6 52.0,895.6 57.0,898.0 62.0,886.0 68.0,875.0 73.0,874.4 77.0,886.0 81.0,904.0 85.0,920.0 89.0,929.0 93.0,933.0 98.0,932.4 103.0,928.0 108.0,925.6 113.0,922.0 118.0,913.0 123.0,904.0 128.0,901.0 133.0,906.0 138.0,910.0 143.0,909.0 148.0,900.0 153.0,889.0 158.0,881.0 163.0,875.0 169.4,868.4 173.0,877.0 177.0,892.0 181.0,909.0 185.0,925.0 190.0,932.0 196.0,932.0 201.0,927.0 206.0,921.6 211.0,920.6 216.0,920.0 221.0,916.0 225.0,913.0 230.0,898.0 235.0,884.0 240.0,872.0 245.0,863.0 250.0,861.6 255.0,862.0 260.0,866.0 265.0,869.6 270.0,872.0 275.0,871.6 280.0,867.8 285.0,868.0 290.0,871.0 295.0,872.4 300.0,871.0 306.0,871.0 310.0,880.0 314.0,894.0 318.0,909.0 322.0,920.0 327.0,928.0 332.0,932.4 337.0,933.6 342.0,934.4 347.0,934.4 351.0,932.0 356.0,926.0 360.0,917.0 364.0,904.0 368.0,888.0 372.0,873.0 376.0,863.0 381.0,860.0 386.0,859.0 390.0,861.0 395.0,868.0 400.0,878.0 405.0,883.0 410.0,884.0 416.0,883.0 422.0,882.0 427.0,877.0 432.0,873.0 437.0,870.0 442.0,867.0 447.0,865.6 452.0,866.0 457.0,877.0 462.0,891.0 468.0,909.0 473.0,905.0 478.0,892.0 483.4,875.6 488.0,883.0 493.0,894.0 498.0,909.0 503.0,908.0 508.0,915.0 513.0,919.0 518.0,924.0 523.0,923.0 529.0,923.0 534.0,924.0 539.0,928.0 544.0,931.6 549.0,932.0 554.0,931.0 558.0,920.0 562.0,904.0 566.0,889.0 570.0,877.0 574.4,871.0 578.0,880.0 581.6,894.0 585.0,908.0 589.0,921.0 594.0,918.0 598.0,908.0 602.0,898.0 605.6,893.6 610.0,894.0 615.0,898.0 620.0,899.0 624.0,892.0 628.0,883.0 633.0,872.0 638.0,864.0 642.0,859.0 646.0,855.6 651.0,856.0 656.0,859.0 660.0,861.0 665.0,859.0 670.0,857.6 675.0,854.4 680.0,853.6 685.0,854.0 690.0,855.6 695.0,860.0 700.0,864.0 705.0,868.0 709.0,869.0 714.0,865.0 719.0,860.0 723.0,857.6 728.0,859.0 732.0,859.0 737.0,857.0 742.0,856.0 747.0,854.0 760.0,853.6 765.0,855.0 769.0,860.0 773.0,870.0 777.0,888.0 781.0,906.0 784.0,918.0 787.0,928.0 792.0,927.6 797.0,927.0 802.0,925.6 807.0,916.0 812.0,896.0 817.0,872.0 822.0,861.0 827.0,861.0 832.0,870.0 837.0,881.0 842.0,894.0 847.6,902.4 852.0,893.0 857.0,878.0 863.0,862.0 868.0,861.6 873.0,862.0 878.0,863.6 883.0,868.0 888.0,877.0 893.0,885.0 898.0,895.0 903.0,897.0 908.0,910.0 913.0,912.0 918.0,911.6 923.0,898.0 929.0,886.0 934.0,881.0 939.0,880.0 944.0,881.0 949.0,888.0 954.0,902.0 959.0,921.0 963.0,924.0 967.0,914.0 971.0,898.0 975.0,885.0 980.0,877.0 984.0,875.6 989.0,874.4 994.0,866.0 1000.0,858.0 1006.0,854.0 1020.0,853.6 1028.0,855.0 1034.0,855.6 1044.0,854.0 1054.0,853.6 1064.0,855.0 1069.0,860.0 1074.0,866.0 1079.0,873.0 1082.0,876.4 1086.0,874.0 1091.0,864.0 1096.0,855.6 1101.0,855.0 1106.0,864.0 1110.0,876.0 1114.0,888.0 1116.4,891.6 1121.0,888.0 1125.0,876.0 1129.0,866.0 1132.0,859.6 1136.0,862.0 1141.0,874.0 1145.0,894.0 1149.0,908.0 1153.0,920.0 1157.0,929.0 1162.0,933.0 1166.0,930.0 1171.0,920.0 1175.0,906.0 1179.0,888.0 1183.0,872.0 1188.0,861.0 1192.0,862.0 1197.0,870.0 1201.0,882.0 1205.0,898.0 1209.0,912.0 1213.0,923.0 1217.0,928.0 1222.0,928.4"/>
<g font-size="11">
<rect x="1233.5" y="172.5" width="41" height="14" fill="none" stroke="#66ee66"/>
<rect x="1233.5" y="171.5" width="41" height="13" fill="none" stroke="#800000"/>
<text x="1236" y="182" fill="#117722" textLength="37" lengthAdjust="spacingAndGlyphs">2020.49</text>
<line x1="1233" y1="180.5" x2="1278" y2="180.5" stroke="#1c4478" shape-rendering="crispEdges"/>
<rect x="1243.5" y="200.5" width="20" height="13" fill="#fff" stroke="#66aadd"/>
<text x="1245" y="211" fill="#dd2222">g</text>
<rect x="1248.5" y="200.5" width="26" height="13" fill="#fff" stroke="#ff9933"/>
<text x="1251" y="211" fill="#dd1111" textLength="22" lengthAdjust="spacingAndGlyphs">2007</text>
<rect x="1233.5" y="212.5" width="41" height="13" fill="#fff" stroke="#000080"/>
<text x="1236" y="223" fill="#117722" textLength="37" lengthAdjust="spacingAndGlyphs">2001.16</text>
<rect x="1245.5" y="915.5" width="29" height="14" fill="#fff" stroke="#66ee44"/>
<text x="1247" y="926" fill="#117722">14.08</text>
<rect x="1251.5" y="920.5" width="24" height="14" fill="#fff" stroke="#800000"/>
<text x="1253.5" y="931.3" fill="#117722" font-size="10.5" textLength="19.5" lengthAdjust="spacingAndGlyphs">7.62</text>
</g>
</svg>
</div>
</body>
</html>
